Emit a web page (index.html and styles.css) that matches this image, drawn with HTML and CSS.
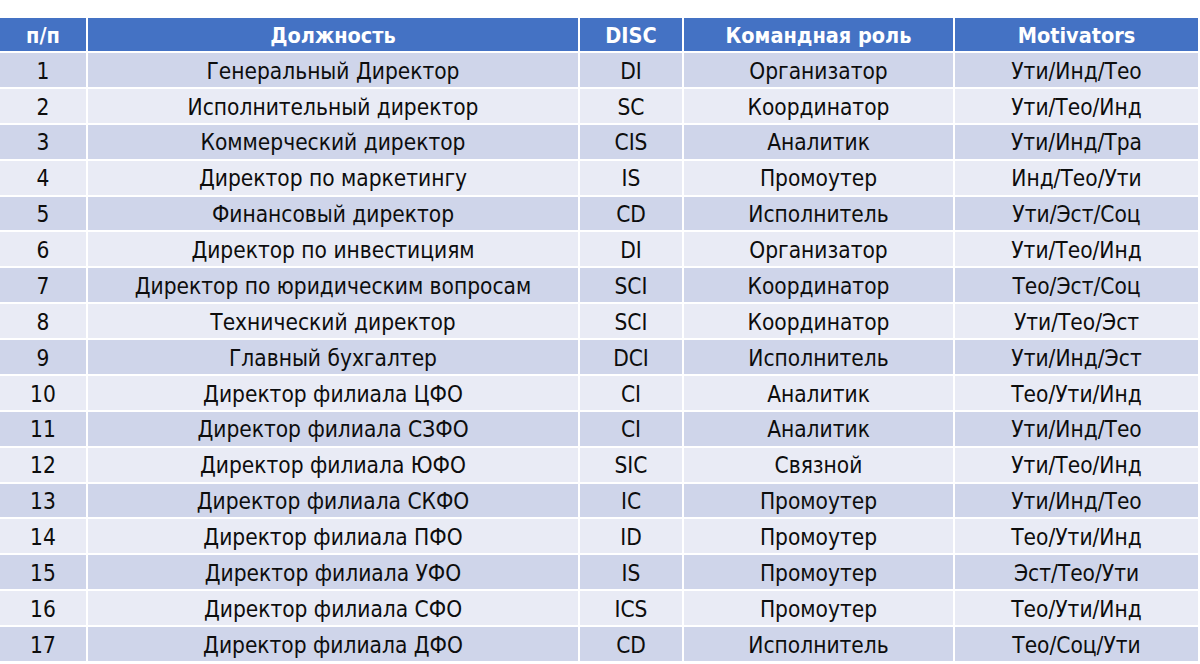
FILE: index.html
```html
<!DOCTYPE html>
<html lang="ru">
<head>
<meta charset="utf-8">
<title>Таблица</title>
<link rel="stylesheet" href="styles.css">
</head>
<body>
<div class="sheet">
  <div class="table">
    <div class="row head">
      <div class="cell">п/п</div>
      <div class="cell">Должность</div>
      <div class="cell">DISC</div>
      <div class="cell">Командная роль</div>
      <div class="cell">Motivators</div>
    </div>
    <div class="row odd"><div class="cell">1</div><div class="cell">Генеральный Директор</div><div class="cell">DI</div><div class="cell">Организатор</div><div class="cell">Ути/Инд/Тео</div></div>
    <div class="row even"><div class="cell">2</div><div class="cell">Исполнительный директор</div><div class="cell">SC</div><div class="cell">Координатор</div><div class="cell">Ути/Тео/Инд</div></div>
    <div class="row odd"><div class="cell">3</div><div class="cell">Коммерческий директор</div><div class="cell">CIS</div><div class="cell">Аналитик</div><div class="cell">Ути/Инд/Тра</div></div>
    <div class="row even"><div class="cell">4</div><div class="cell">Директор по маркетингу</div><div class="cell">IS</div><div class="cell">Промоутер</div><div class="cell">Инд/Тео/Ути</div></div>
    <div class="row odd"><div class="cell">5</div><div class="cell">Финансовый директор</div><div class="cell">CD</div><div class="cell">Исполнитель</div><div class="cell">Ути/Эст/Соц</div></div>
    <div class="row even"><div class="cell">6</div><div class="cell">Директор по инвестициям</div><div class="cell">DI</div><div class="cell">Организатор</div><div class="cell">Ути/Тео/Инд</div></div>
    <div class="row odd"><div class="cell">7</div><div class="cell">Директор по юридическим вопросам</div><div class="cell">SCI</div><div class="cell">Координатор</div><div class="cell">Тео/Эст/Соц</div></div>
    <div class="row even"><div class="cell">8</div><div class="cell">Технический директор</div><div class="cell">SCI</div><div class="cell">Координатор</div><div class="cell">Ути/Тео/Эст</div></div>
    <div class="row odd"><div class="cell">9</div><div class="cell">Главный бухгалтер</div><div class="cell">DCI</div><div class="cell">Исполнитель</div><div class="cell">Ути/Инд/Эст</div></div>
    <div class="row even"><div class="cell">10</div><div class="cell">Директор филиала ЦФО</div><div class="cell">CI</div><div class="cell">Аналитик</div><div class="cell">Тео/Ути/Инд</div></div>
    <div class="row odd"><div class="cell">11</div><div class="cell">Директор филиала СЗФО</div><div class="cell">CI</div><div class="cell">Аналитик</div><div class="cell">Ути/Инд/Тео</div></div>
    <div class="row even"><div class="cell">12</div><div class="cell">Директор филиала ЮФО</div><div class="cell">SIC</div><div class="cell">Связной</div><div class="cell">Ути/Тео/Инд</div></div>
    <div class="row odd"><div class="cell">13</div><div class="cell">Директор филиала СКФО</div><div class="cell">IC</div><div class="cell">Промоутер</div><div class="cell">Ути/Инд/Тео</div></div>
    <div class="row even"><div class="cell">14</div><div class="cell">Директор филиала ПФО</div><div class="cell">ID</div><div class="cell">Промоутер</div><div class="cell">Тео/Ути/Инд</div></div>
    <div class="row odd"><div class="cell">15</div><div class="cell">Директор филиала УФО</div><div class="cell">IS</div><div class="cell">Промоутер</div><div class="cell">Эст/Тео/Ути</div></div>
    <div class="row even"><div class="cell">16</div><div class="cell">Директор филиала СФО</div><div class="cell">ICS</div><div class="cell">Промоутер</div><div class="cell">Тео/Ути/Инд</div></div>
    <div class="row odd"><div class="cell">17</div><div class="cell">Директор филиала ДФО</div><div class="cell">CD</div><div class="cell">Исполнитель</div><div class="cell">Тео/Соц/Ути</div></div>
  </div>
</div>
</body>
</html>
```

FILE: styles.css
```css
html, body {
  margin: 0;
  padding: 0;
  background: #ffffff;
}

.sheet {
  width: 1200px;
  height: 664px;
  padding-top: 18px;
  box-sizing: border-box;
  overflow: hidden;
  font-family: "DejaVu Sans Condensed", "DejaVu Sans", sans-serif;
  font-size: 22.5px;
  color: #0d0d0d;
}

.table {
  display: flex;
  flex-direction: column;
  gap: 2px;
  width: 1198px;
}

.row {
  display: grid;
  grid-template-columns: 86px 490px 102px 269px 243px;
  column-gap: 2px;
  height: 33.88px;
}

.row.head {
  height: 33px;
}

.cell {
  display: flex;
  align-items: center;
  justify-content: center;
  white-space: nowrap;
  line-height: 1;
  padding-top: 2px;
  box-sizing: border-box;
}

.head .cell {
  background: #4472c4;
  color: #ffffff;
  font-weight: bold;
  font-size: 21.5px;
}

.odd .cell {
  background: #cfd5ea;
}

.even .cell {
  background: #e9ebf5;
}
```
